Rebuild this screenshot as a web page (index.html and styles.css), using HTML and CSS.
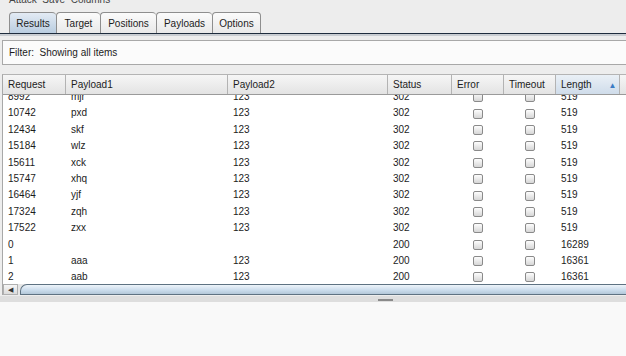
FILE: index.html
```html
<!DOCTYPE html>
<html lang="en">
<head>
    <meta charset="UTF-8">
    <title>Intruder attack</title>
    <link rel="stylesheet" href="styles.css">
</head>
<body>

    <div class="menubar"><span>Attack&nbsp;&nbsp;Save&nbsp;&nbsp;Columns</span></div>

    <div class="tabs">
        <div class="tab active" style="width:47px">Results</div>
        <div class="tab" style="width:44px">Target</div>
        <div class="tab" style="width:56px">Positions</div>
        <div class="tab" style="width:56px">Payloads</div>
        <div class="tab" style="width:49px">Options</div>
    </div>
    <div class="tabline"></div>

    <div class="filter">Filter: &nbsp;Showing all items</div>

    <div class="table">
        <div class="row head">
            <div class="cell">Request</div>
            <div class="cell">Payload1</div>
            <div class="cell">Payload2</div>
            <div class="cell">Status</div>
            <div class="cell">Error</div>
            <div class="cell">Timeout</div>
            <div class="cell sorted">Length <span class="arrow">&#9650;</span></div>
            <div class="cell"></div>
        </div>
        <div class="body">
            <div class="rows" id="rows"></div>
        </div>
        <div class="hscroll">
            <div class="btn">&#9664;</div>
            <div class="thumb"></div>
        </div>
    </div>

    <div class="splitter"><div class="grip"></div></div>
    <div class="bottom"></div>

    <script>
        const data = [
            ["8992", "mjr", "123", "302", "519"],
            ["10742", "pxd", "123", "302", "519"],
            ["12434", "skf", "123", "302", "519"],
            ["15184", "wlz", "123", "302", "519"],
            ["15611", "xck", "123", "302", "519"],
            ["15747", "xhq", "123", "302", "519"],
            ["16464", "yjf", "123", "302", "519"],
            ["17324", "zqh", "123", "302", "519"],
            ["17522", "zxx", "123", "302", "519"],
            ["0", "", "", "200", "16289"],
            ["1", "aaa", "123", "200", "16361"],
            ["2", "aab", "123", "200", "16361"]
        ];

        const rows = document.getElementById("rows");
        data.forEach((d) => {
            const row = document.createElement("div");
            row.className = "row";
            row.innerHTML =
                `<div class="cell">${d[0]}</div>` +
                `<div class="cell">${d[1]}</div>` +
                `<div class="cell">${d[2]}</div>` +
                `<div class="cell">${d[3]}</div>` +
                `<div class="cell center"><span class="check"></span></div>` +
                `<div class="cell center"><span class="check"></span></div>` +
                `<div class="cell">${d[4]}</div>` +
                `<div class="cell"></div>`;
            rows.appendChild(row);
        });
    </script>
</body>
</html>
```

FILE: styles.css
```css
*{
    margin: 0;
    padding: 0;
    box-sizing: border-box;
}

html, body{
    width: 626px;
    height: 356px;
    overflow: hidden;
    background-color: #ededed;
    color: #1c1c1c;
    font-family: "Liberation Sans", Arial, sans-serif;
    font-size: 10px;
}

.menubar{
    height: 9px;
    overflow: hidden;
    padding-left: 9px;
    color: #444;
}
.menubar span{
    display: block;
    margin-top: -6px;
    line-height: 12px;
}

.tabs{
    display: flex;
    height: 21px;
    margin-top: 3px;
    padding-left: 9px;
}

.tab{
    height: 21px;
    line-height: 21px;
    text-align: center;
    border: 1px solid #8e8e8e;
    border-bottom: none;
    border-right: none;
    border-radius: 4px 4px 0 0;
    background: linear-gradient(#fbfbfb, #e9e9e9);
}
.tab:last-child{
    border-right: 1px solid #8e8e8e;
}
.tab.active{
    background: linear-gradient(#e3ebf4, #b9cde0);
}

.tabline{
    height: 3px;
    border-top: 1px solid #1e2c3d;
    background-color: #c9cdd2;
}

.filter{
    margin: 4px 0 0 2px;
    width: 640px;
    height: 25px;
    line-height: 23px;
    padding-left: 6px;
    border: 1px solid #a8a8a8;
    background-color: #fbfbfb;
}

.table{
    margin: 9px 0 0 2px;
    width: 640px;
    border-left: 1px solid #a8a8a8;
    border-top: 1px solid #b4b4b4;
    background-color: #fff;
}

.row{
    display: grid;
    grid-template-columns: 63px 162px 160px 64px 52px 52px 64px 1fr;
    height: 16.4px;
    line-height: 16.4px;
}

.row .cell{
    padding-left: 5px;
    white-space: nowrap;
    overflow: hidden;
}

.row.head{
    height: 20px;
    line-height: 19px;
    background: linear-gradient(#f6f6f6, #e3e3e3);
    border-bottom: 1px solid #9a9a9a;
}
.row.head .cell{
    border-right: 1px solid #b3b3b3;
}
.row.head .sorted{
    background: linear-gradient(#eaf0f6, #cfdcea);
}
.arrow{
    margin-left: 14px;
    font-size: 8px;
    color: #3a7cc4;
}

.body{
    height: 189px;
    overflow: hidden;
}
.rows{
    margin-top: -6px;
}

.center{
    display: flex;
    justify-content: center;
    align-items: center;
}
.row .cell.center{
    padding-left: 0;
}

.check{
    width: 10px;
    height: 10px;
    border: 1px solid #8a8a8a;
    border-radius: 2px;
    background: linear-gradient(#fdfdfd, #d6d6d6);
}

.hscroll{
    display: flex;
    height: 11px;
    background-color: #e6e6e6;
}
.btn{
    width: 15px;
    font-size: 7px;
    line-height: 10px;
    text-align: center;
    color: #333;
    border: 1px solid #b0b0b0;
    background: linear-gradient(#f6f6f6, #dcdcdc);
}
.thumb{
    flex: 1;
    margin-left: 2px;
    border: 1px solid #5e7282;
    border-right: none;
    border-radius: 7px 0 0 0;
    background: linear-gradient(#eef4fa, #c9dbeb 60%, #b3c7d8);
}

.splitter{
    height: 6px;
    margin-top: 1px;
    display: flex;
    justify-content: center;
    background-color: #dedede;
}
.grip{
    width: 15px;
    height: 2px;
    margin: 3px 0 0 145px;
    background-color: #8a8a8a;
}

.bottom{
    height: 54px;
    background-color: #f9f9f9;
}
```
